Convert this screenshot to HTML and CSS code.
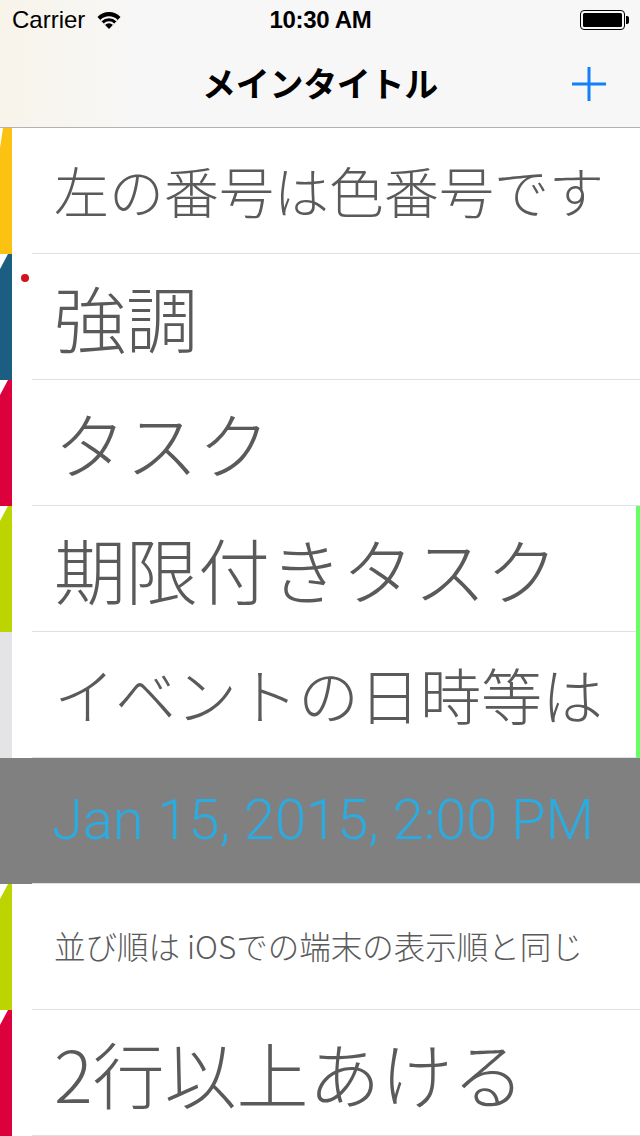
FILE: index.html
```html
<!DOCTYPE html>
<html lang="ja">
<head>
<meta charset="utf-8">
<link rel="stylesheet" href="styles.css">
</head>
<body>
<div class="screen">
  <header class="top">
    <div class="status">
      <div class="status-left">
        <span class="carrier">Carrier</span>
        <svg class="wifi" width="24" height="18" viewBox="0 0 20 15">
          <path d="M10 15 L0.4 4.9 A13.6 13.6 0 0 1 19.6 4.9 Z" fill="#000"/>
          <path d="M3.3 8 A9.4 9.4 0 0 1 16.7 8" stroke="#f7f7f7" stroke-width="1.6" fill="none"/>
          <path d="M6.1 11.1 A5.3 5.3 0 0 1 13.9 11.1" stroke="#f7f7f7" stroke-width="1.6" fill="none"/>
        </svg>
      </div>
      <span class="time">10:30 AM</span>
      <div class="status-right">
        <span class="battery"><span class="battery-fill"></span></span>
        <span class="battery-nub"></span>
      </div>
    </div>
    <nav class="navbar">
      <h1 class="title">メインタイトル</h1>
      <svg class="add" width="36" height="36" viewBox="0 0 36 36">
        <path d="M18 1 V35 M1 18 H35" stroke="#147efb" stroke-width="3" fill="none"/>
      </svg>
    </nav>
  </header>
  <ul class="list">
    <li class="row">
      <span class="tag tag-yellow"></span>
      <div class="cell"><span class="text t-55">左の番号は色番号です</span></div>
    </li>
    <li class="row">
      <span class="tag tag-blue"></span>
      <span class="dot"></span>
      <div class="cell"><span class="text t-70">強調</span></div>
    </li>
    <li class="row">
      <span class="tag tag-red"></span>
      <div class="cell"><span class="text t-70">タスク</span></div>
    </li>
    <li class="row">
      <span class="tag tag-lime"></span>
      <div class="cell"><span class="text t-70">期限付きタスク</span></div>
      <span class="due"></span>
    </li>
    <li class="row">
      <span class="tag tag-gray"></span>
      <div class="cell"><span class="text t-60">イベントの日時等は</span></div>
      <span class="due"></span>
    </li>
    <li class="row row-date">
      <span class="tag"></span>
      <div class="cell"><span class="date">Jan 15, 2015, 2:00 PM</span></div>
    </li>
    <li class="row">
      <span class="tag tag-lime"></span>
      <div class="cell"><span class="text t-31">並び順は iOSでの端末の表示順と同じ</span></div>
    </li>
    <li class="row">
      <span class="tag tag-red"></span>
      <div class="cell"><span class="text t-70">2行以上あける</span></div>
    </li>
  </ul>
</div>
</body>
</html>
```

FILE: styles.css
```css
* { box-sizing: border-box; }
html, body { margin: 0; padding: 0; background: #fff; }
body { font-family: "Noto Sans CJK JP", "Liberation Sans", sans-serif; }
.screen { width: 640px; height: 1136px; overflow: hidden; display: flex; flex-direction: column; }

.top {
  background: linear-gradient(to right, #f8f4ea 0, #f7f7f7 140px);
  border-bottom: 1px solid #b2b2b2;
  height: 128px;
  display: flex;
  flex-direction: column;
}
.status {
  height: 40px;
  display: flex;
  align-items: center;
  justify-content: space-between;
  padding: 0 11px 0 12px;
  font-family: "Liberation Sans", sans-serif;
  font-size: 24px;
  color: #000;
}
.status-left { display: flex; align-items: center; gap: 12px; width: 200px; }
.wifi { margin-top: -1px; }
.time { font-weight: bold; font-size: 24px; letter-spacing: -0.3px; }
.status-right { display: flex; align-items: center; justify-content: flex-end; width: 200px; }
.battery {
  width: 45px; height: 20px;
  border: 1.5px solid #000;
  border-radius: 4px;
  padding: 2px;
  display: flex;
}
.battery-fill { flex: 1; background: #000; border-radius: 1.5px; }
.battery-nub { width: 3px; height: 8px; background: #000; border-radius: 0 2px 2px 0; margin-left: 1px; }

.navbar {
  flex: 1;
  display: flex;
  align-items: center;
  justify-content: center;
  position: relative;
  padding-bottom: 2px;
}
.title {
  margin: 0;
  font-size: 34px;
  font-weight: bold;
  color: #000;
  letter-spacing: -0.3px;
}
.add { position: absolute; right: 33px; top: 26px; }

.list { list-style: none; margin: 0; padding: 0; }
.row { height: 126px; display: flex; position: relative; }
.tag {
  width: 12px;
  flex: none;
  clip-path: polygon(8px 0, 100% 0, 100% 100%, 0 100%, 0 15px);
}
.tag-yellow { background: #fbc212; clip-path: polygon(3px 0, 100% 0, 100% 100%, 0 100%, 0 20px); }
.tag-blue { background: #1b5e82; }
.tag-red { background: #dc003d; }
.tag-lime { background: #bcd400; }
.tag-gray { background: #e4e4e6; clip-path: none; }
.cell {
  flex: 1;
  margin-left: 20px;
  border-bottom: 1px solid #e0e0e0;
  display: flex;
  align-items: center;
  padding-left: 22px;
  padding-bottom: 2px;
  white-space: nowrap;
}
.text { color: #5a5a5a; font-weight: 300; line-height: 1; }
.t-55 { font-size: 55px; }
.t-70 { font-size: 72px; }
.t-60 { font-size: 61px; }
.t-31 { font-size: 31.5px; }
.due { width: 4px; flex: none; background: #66ff66; }
.dot {
  position: absolute;
  left: 21px; top: 20px;
  width: 8px; height: 8px;
  border-radius: 50%;
  background: #d0141e;
}
.row-date { background: #808080; }
.row-date .tag { clip-path: none; }
.date {
  font-family: Roboto, "Liberation Sans", sans-serif;
  font-weight: 300;
  font-size: 56px;
  color: #2aace2;
  margin-left: -2px;
}
```
